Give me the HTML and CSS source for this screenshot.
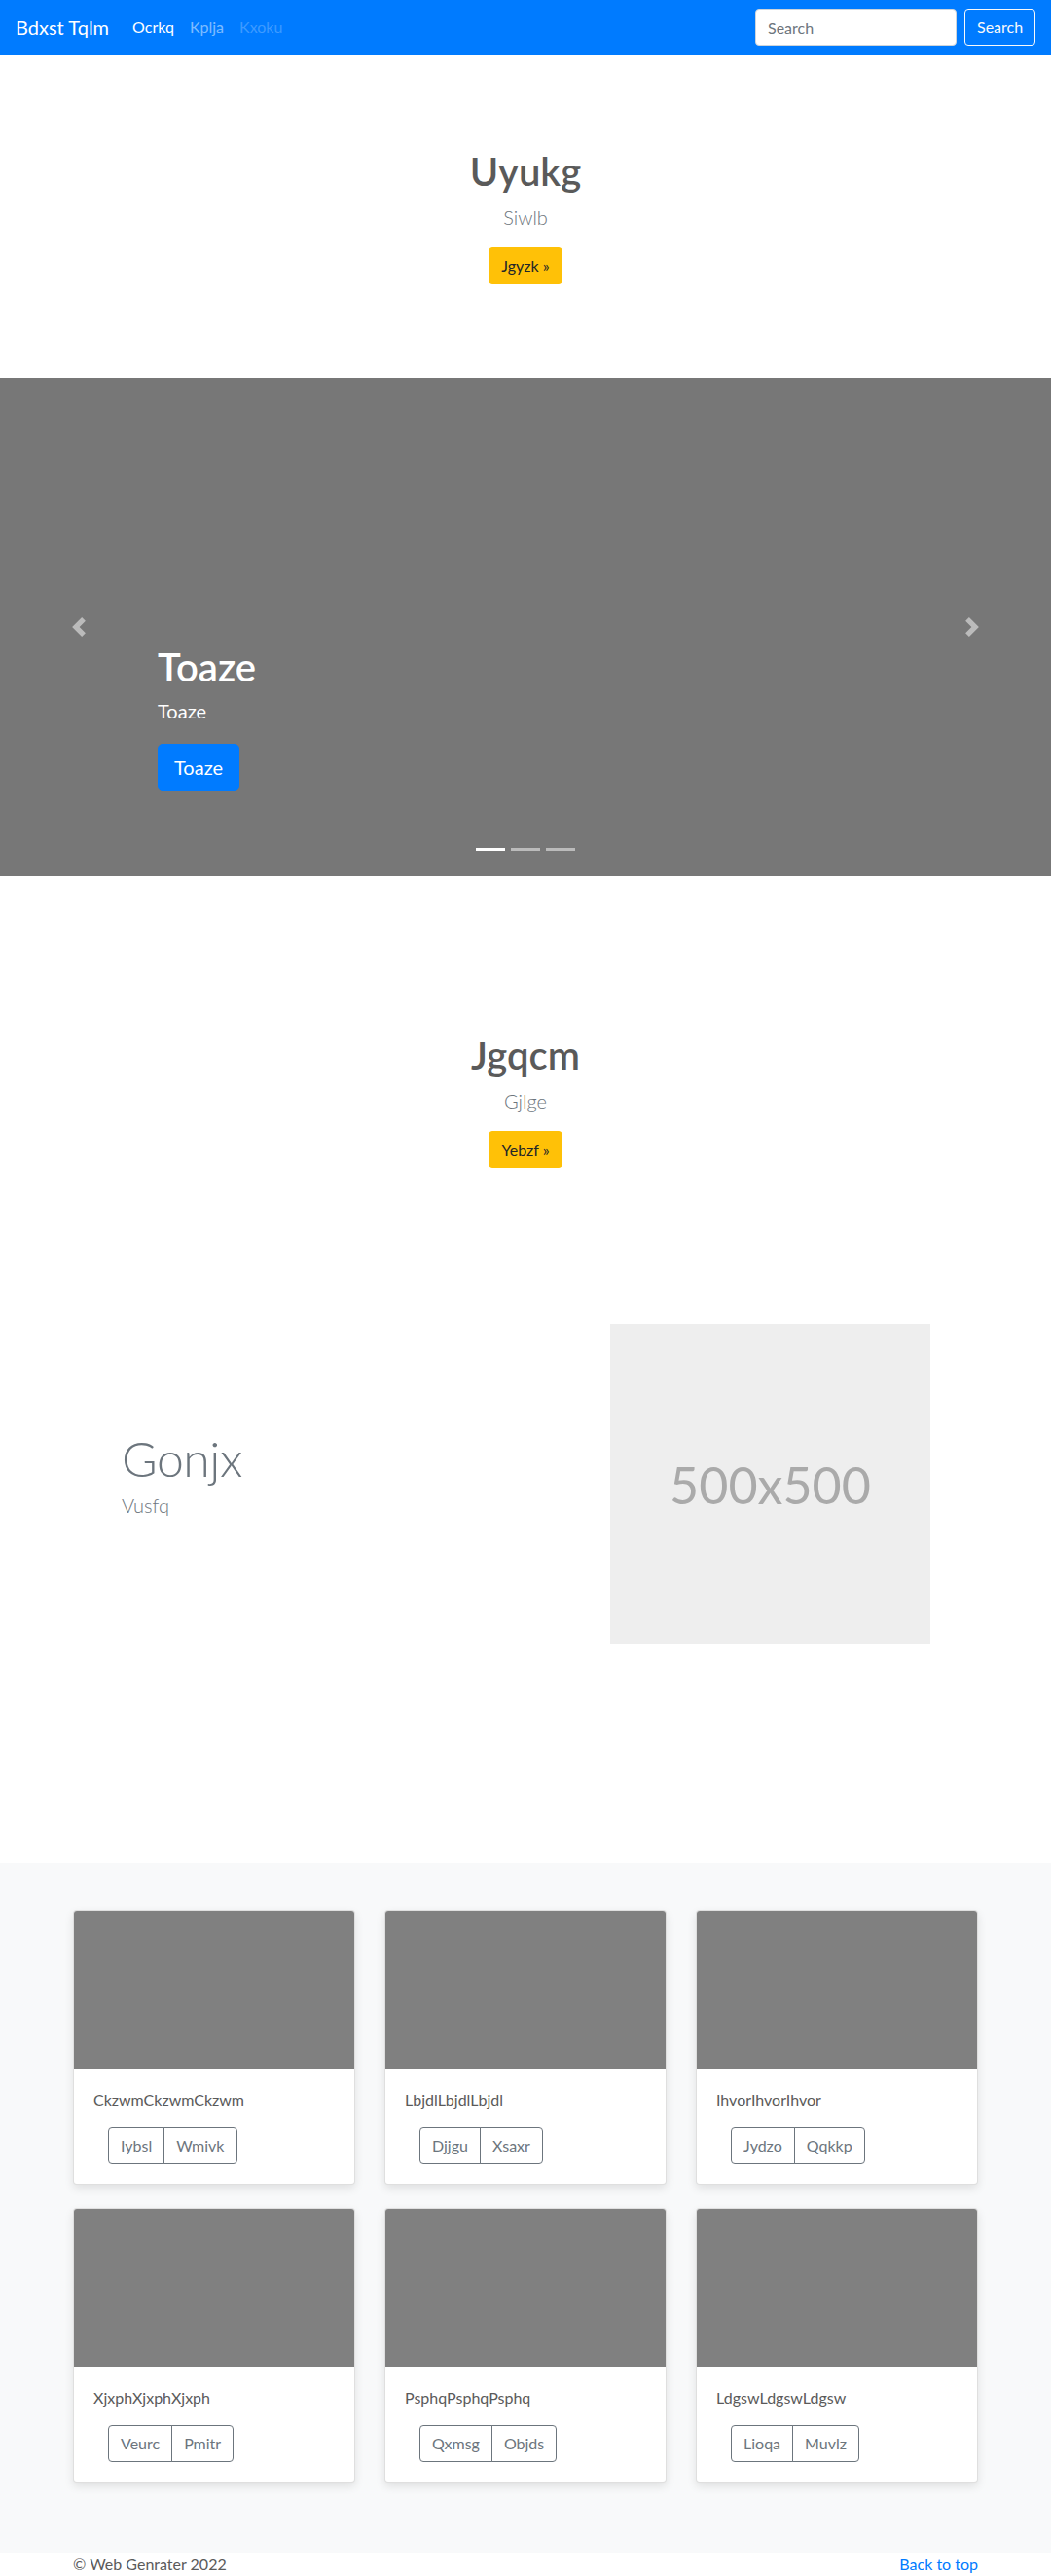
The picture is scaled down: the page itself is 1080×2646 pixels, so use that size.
FILE: index.html
```html
<!DOCTYPE html>
<html lang="en">
<head>
<meta charset="utf-8">
<title>Bdxst Tqlm</title>
<link rel="stylesheet" href="styles.css">
</head>
<body>
<nav class="navbar">
  <a class="brand" href="#">Bdxst Tqlm</a>
  <ul class="nav">
    <li><a class="nav-link active" href="#">Ocrkq</a></li>
    <li><a class="nav-link" href="#">Kplja</a></li>
    <li><a class="nav-link disabled" href="#">Kxoku</a></li>
  </ul>
  <form class="search">
    <input class="search-input" type="text" placeholder="Search">
    <button class="btn btn-outline-light" type="button">Search</button>
  </form>
</nav>

<section class="hero">
  <h1 class="hero-title">Uyukg</h1>
  <p class="lead muted">Siwlb</p>
  <a class="btn btn-warning" href="#">Jgyzk &raquo;</a>
</section>

<div class="carousel">
  <ol class="indicators">
    <li class="active"></li>
    <li></li>
    <li></li>
  </ol>
  <div class="caption">
    <h1 class="caption-title">Toaze</h1>
    <p class="caption-text">Toaze</p>
    <div class="caption-action"><a class="btn btn-lg btn-primary" href="#">Toaze</a></div>
  </div>
  <a class="control control-prev" href="#">
    <svg width="20" height="20" viewBox="0 0 8 8"><path d="M5.25 0l-4 4 4 4 1.5-1.5L4.25 4l2.5-2.5L5.25 0z"/></svg>
  </a>
  <a class="control control-next" href="#">
    <svg width="20" height="20" viewBox="0 0 8 8"><path d="M2.75 0l-1.5 1.5L3.75 4l-2.5 2.5L2.75 8l4-4-4-4z"/></svg>
  </a>
</div>

<section class="hero">
  <h1 class="hero-title">Jgqcm</h1>
  <p class="lead muted">Gjlge</p>
  <a class="btn btn-warning" href="#">Yebzf &raquo;</a>
</section>

<div class="featurette">
  <div class="feat-text">
    <h2 class="feat-heading">Gonjx</h2>
    <p class="lead muted feat-lead">Vusfq</p>
  </div>
  <div class="placeholder">500x500</div>
</div>

<hr class="divider">

<div class="album">
  <div class="album-grid">
    <div class="card">
      <div class="card-img"></div>
      <div class="card-body">
        <p class="card-text">CkzwmCkzwmCkzwm</p>
        <div class="btn-group"><a class="btn btn-outline" href="#">Iybsl</a><a class="btn btn-outline" href="#">Wmivk</a></div>
      </div>
    </div>
    <div class="card">
      <div class="card-img"></div>
      <div class="card-body">
        <p class="card-text">LbjdlLbjdlLbjdl</p>
        <div class="btn-group"><a class="btn btn-outline" href="#">Djjgu</a><a class="btn btn-outline" href="#">Xsaxr</a></div>
      </div>
    </div>
    <div class="card">
      <div class="card-img"></div>
      <div class="card-body">
        <p class="card-text">IhvorIhvorIhvor</p>
        <div class="btn-group"><a class="btn btn-outline" href="#">Jydzo</a><a class="btn btn-outline" href="#">Qqkkp</a></div>
      </div>
    </div>
    <div class="card">
      <div class="card-img"></div>
      <div class="card-body">
        <p class="card-text">XjxphXjxphXjxph</p>
        <div class="btn-group"><a class="btn btn-outline" href="#">Veurc</a><a class="btn btn-outline" href="#">Pmitr</a></div>
      </div>
    </div>
    <div class="card">
      <div class="card-img"></div>
      <div class="card-body">
        <p class="card-text">PsphqPsphqPsphq</p>
        <div class="btn-group"><a class="btn btn-outline" href="#">Qxmsg</a><a class="btn btn-outline" href="#">Objds</a></div>
      </div>
    </div>
    <div class="card">
      <div class="card-img"></div>
      <div class="card-body">
        <p class="card-text">LdgswLdgswLdgsw</p>
        <div class="btn-group"><a class="btn btn-outline" href="#">Lioqa</a><a class="btn btn-outline" href="#">Muvlz</a></div>
      </div>
    </div>
  </div>
</div>

<footer class="footer">
  <p class="copy">&copy; Web Genrater 2022</p>
  <p><a class="top-link" href="#">Back to top</a></p>
</footer>
</body>
</html>
```

FILE: styles.css
```css
* { box-sizing: border-box; }

body {
  margin: 0;
  font-family: Lato, "Open Sans", sans-serif;
  font-size: 16px;
  line-height: 1.5;
  color: #5a5a5a;
  background: #fff;
}

a { text-decoration: none; }

/* navbar */
.navbar {
  height: 56px;
  background: #007bff;
  display: flex;
  align-items: center;
  padding: 0 16px;
}
.brand {
  color: #fff;
  font-size: 20px;
  line-height: 30px;
  margin-right: 16px;
}
.nav {
  list-style: none;
  display: flex;
  margin: 0;
  padding: 0;
}
.nav-link {
  display: block;
  padding: 8px;
  color: rgba(255,255,255,.5);
}
.nav-link.active { color: #fff; }
.nav-link.disabled { color: rgba(255,255,255,.25); }

.search {
  margin: 0 0 0 auto;
  display: flex;
  align-items: center;
}
.search-input {
  width: 207px;
  height: 38px;
  margin-right: 8px;
  padding: 6px 12px;
  font-family: inherit;
  font-size: 16px;
  color: #495057;
  background: #fff;
  border: 1px solid #ced4da;
  border-radius: 4px;
}
.search-input::placeholder { color: #6c757d; }

/* buttons */
.btn {
  display: inline-block;
  font-family: inherit;
  font-size: 16px;
  line-height: 24px;
  padding: 6px 12px;
  border: 1px solid transparent;
  border-radius: 4px;
  cursor: pointer;
}
.btn-outline-light {
  background: transparent;
  color: #f8f9fa;
  border-color: #f8f9fa;
  width: 73px;
}
.btn-warning {
  background: #ffc107;
  border-color: #ffc107;
  color: #212529;
}
.btn-primary {
  background: #007bff;
  border-color: #007bff;
  color: #fff;
}
.btn-lg {
  font-size: 20px;
  line-height: 30px;
  padding: 8px 16px;
  border-radius: 5px;
}

/* hero */
.hero {
  text-align: center;
  padding: 96px 0;
}
.hero-title {
  margin: 0 0 8px;
  font-size: 40px;
  line-height: 1.2;
  font-weight: 600;
  color: #5a5a5a;
}
.lead {
  font-size: 20px;
  font-weight: 300;
  line-height: 30px;
  margin: 0 0 16px;
}
.muted { color: #6c757d; }

/* carousel */
.carousel {
  position: relative;
  height: 512px;
  background: #777;
  margin-bottom: 64px;
}
.indicators {
  position: absolute;
  left: 0;
  right: 0;
  bottom: 16px;
  margin: 0;
  padding: 0;
  list-style: none;
  display: flex;
  justify-content: center;
}
.indicators li {
  width: 30px;
  height: 3px;
  margin: 10px 3px;
  background: #fff;
  opacity: .5;
}
.indicators li.active { opacity: 1; }

.caption {
  position: absolute;
  left: 162px;
  bottom: 88px;
  color: #fff;
}
.caption-title {
  margin: 0 0 6px;
  font-size: 40px;
  line-height: 1.2;
  font-weight: 600;
}
.caption-text {
  margin: 0 0 19px;
  font-size: 20px;
  line-height: 30px;
}
.caption-action { display: flex; }

.control {
  position: absolute;
  top: 0;
  bottom: 0;
  width: 162px;
  display: flex;
  align-items: center;
  justify-content: center;
  opacity: .5;
  fill: #fff;
}
.control-prev { left: 0; }
.control-next { right: 0; }

/* featurette */
.featurette {
  width: 960px;
  margin: 0 auto;
  padding: 64px 15px;
  display: flex;
  align-items: center;
}
.feat-text {
  flex: 1;
  padding-left: 50px;
}
.feat-heading {
  margin: 0 0 8px;
  font-size: 50px;
  font-weight: 300;
  line-height: 1;
  color: #6c757d;
  letter-spacing: -0.5px;
}
.placeholder {
  width: 329px;
  height: 329px;
  margin-right: 49px;
  background: #eee;
  color: #aaa;
  font-size: 52px;
  display: flex;
  align-items: center;
  justify-content: center;
}

.divider {
  margin: 80px 0;
  border: 0;
  border-top: 1px solid rgba(0,0,0,.1);
}

/* album */
.album {
  background: #f8f9fa;
  padding: 48px 0 72px;
}
.album-grid {
  width: 930px;
  margin: 0 auto;
  display: grid;
  grid-template-columns: repeat(3, 1fr);
  column-gap: 30px;
  row-gap: 24px;
}
.card {
  background: #fff;
  border: 1px solid rgba(0,0,0,.125);
  border-radius: 4px;
  overflow: hidden;
  box-shadow: 0 4px 10px rgba(0,0,0,.1);
}
.card-img {
  height: 162px;
  background: #808080;
}
.card-body {
  padding: 20px;
}
.card-text {
  margin: 0 0 16px;
  color: #5a5a5a;
}
.btn-group {
  display: inline-flex;
  margin-left: 15px;
}
.btn-outline {
  color: #6c757d;
  border-color: #6c757d;
  background: transparent;
}
.btn-group .btn-outline:first-child {
  border-top-right-radius: 0;
  border-bottom-right-radius: 0;
}
.btn-group .btn-outline:last-child {
  margin-left: -1px;
  border-top-left-radius: 0;
  border-bottom-left-radius: 0;
}

/* footer */
.footer {
  width: 930px;
  margin: 0 auto;
  display: flex;
  justify-content: space-between;
}
.footer p { margin: 0 0 16px; }
.top-link { color: #007bff; }
```
